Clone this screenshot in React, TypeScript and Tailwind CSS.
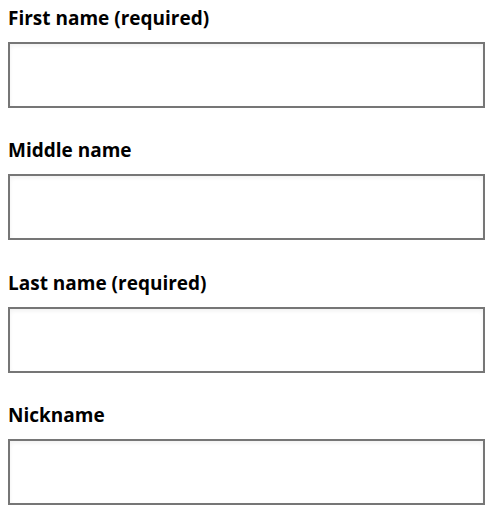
const fields = ['First name (required)', 'Middle name', 'Last name (required)', 'Nickname'];

export default function App() {
  return (
    <div className="pt-[6px] pl-2 pr-[7px] flex flex-col gap-[30.33px] font-['Open_Sans',sans-serif] text-black bg-white">
      {fields.map((label) => (
        <div key={label} className="flex flex-col gap-[12px]">
          <label className="text-[19px] leading-[24px] font-bold">{label}</label>
          <input
            type="text"
            className="h-[66px] w-full border-2 border-[#767676] bg-white shadow-[inset_0_2px_4px_rgba(0,0,0,0.06)] outline-none"
          />
        </div>
      ))}
    </div>
  );
}
